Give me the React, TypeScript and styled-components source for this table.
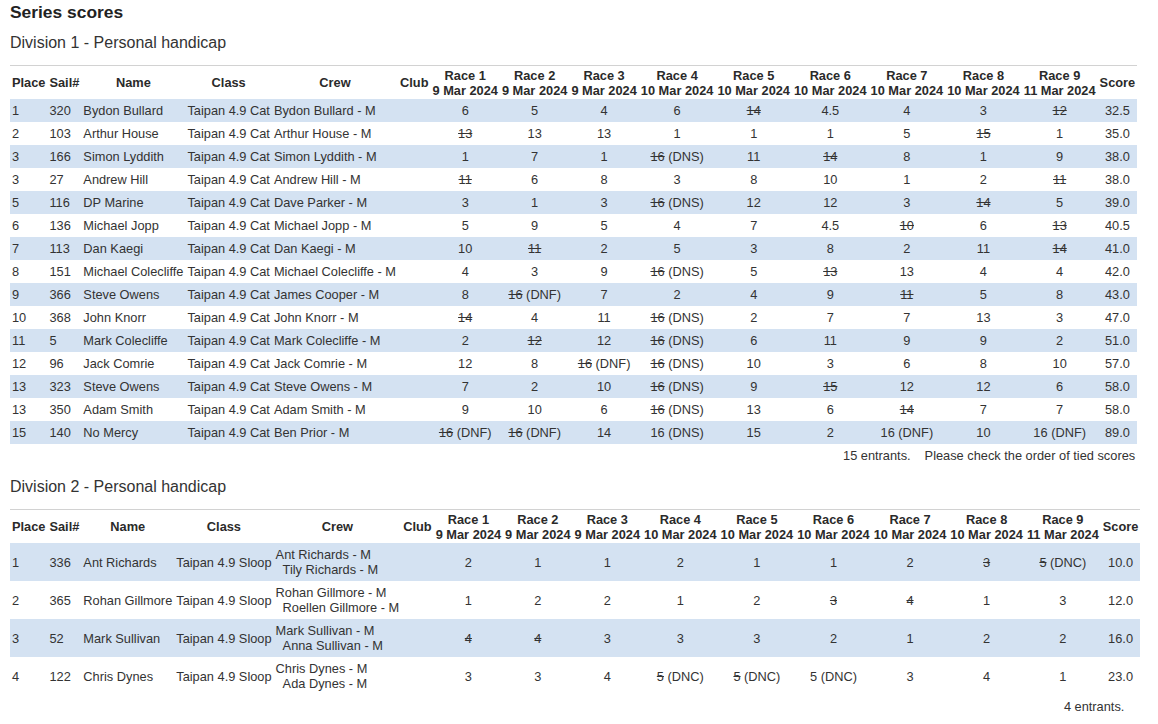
import React from "react";
import styled, { createGlobalStyle } from "styled-components";

const GlobalStyle = createGlobalStyle`
  html, body {
    margin: 0;
    padding: 0;
    background: #ffffff;
  }
  body {
    font-family: "Liberation Sans", Arial, sans-serif;
    color: #333333;
  }
`;

const Page = styled.div`
  padding: 2px 0 0 10px;
`;

const PageTitle = styled.h1`
  margin: 0;
  font-size: 17.4px;
  line-height: 20px;
  font-weight: bold;
  color: #222222;
`;

const DivisionTitle = styled.h2<{ $gap: number }>`
  margin: ${(p) => p.$gap}px 0 13px 0;
  font-size: 16px;
  line-height: 18px;
  font-weight: normal;
  color: #333333;
`;

const ScoreTable = styled.table`
  border-collapse: separate;
  border-spacing: 0;
  border-top: 1px solid #d2d2d2;
  font-size: 12.8px;
  line-height: 15px;
  color: #333333;
`;

const HeadCell = styled.th`
  padding: 1.5px 2px;
  font-weight: bold;
  text-align: center;
  vertical-align: middle;
  white-space: nowrap;
  color: #2a2a2a;
`;

const Row = styled.tr<{ $odd: boolean }>`
  background: ${(p) => (p.$odd ? "#d4e2f2" : "transparent")};
`;

const Cell = styled.td<{ $align?: "left" | "center" }>`
  padding: 4px 2px;
  text-align: ${(p) => p.$align ?? "left"};
  vertical-align: middle;
  white-space: nowrap;
`;

const CrewLine = styled.span<{ $indent: boolean }>`
  display: block;
  padding-left: ${(p) => (p.$indent ? 7 : 0)}px;
`;

const Discard = styled.s`
  text-decoration: line-through;
`;

const Footer = styled.caption`
  caption-side: bottom;
  text-align: right;
  padding: 4px 2px 0 2px;
  font-size: 12.8px;
  line-height: 15px;
  color: #333333;
  white-space: nowrap;
`;

const FooterGap = styled.span`
  display: inline-block;
  width: 14px;
`;

type Entry = {
  place: string;
  sail: string;
  name: string;
  cls: string;
  crew: string[];
  races: string[];
  score: string;
};

type Division = {
  title: string;
  entries: Entry[];
  footer: string[];
};

const raceDates = [
  "9 Mar 2024",
  "9 Mar 2024",
  "9 Mar 2024",
  "10 Mar 2024",
  "10 Mar 2024",
  "10 Mar 2024",
  "10 Mar 2024",
  "10 Mar 2024",
  "11 Mar 2024",
];

const cat = "Taipan 4.9 Cat";
const sloop = "Taipan 4.9 Sloop";

const e = (
  place: string,
  sail: string,
  name: string,
  cls: string,
  crew: string[],
  races: string,
  score: string
): Entry => ({ place, sail, name, cls, crew, races: races.split("|"), score });

const divisions: Division[] = [
  {
    title: "Division 1 - Personal handicap",
    footer: ["15 entrants.", "Please check the order of tied scores"],
    entries: [
      e("1", "320", "Bydon Bullard", cat, ["Bydon Bullard - M"], "6|5|4|6|~14|4.5|4|3|~12", "32.5"),
      e("2", "103", "Arthur House", cat, ["Arthur House - M"], "~13|13|13|1|1|1|5|~15|1", "35.0"),
      e("3", "166", "Simon Lyddith", cat, ["Simon Lyddith - M"], "1|7|1|~16 (DNS)|11|~14|8|1|9", "38.0"),
      e("3", "27", "Andrew Hill", cat, ["Andrew Hill - M"], "~11|6|8|3|8|10|1|2|~11", "38.0"),
      e("5", "116", "DP Marine", cat, ["Dave Parker - M"], "3|1|3|~16 (DNS)|12|12|3|~14|5", "39.0"),
      e("6", "136", "Michael Jopp", cat, ["Michael Jopp - M"], "5|9|5|4|7|4.5|~10|6|~13", "40.5"),
      e("7", "113", "Dan Kaegi", cat, ["Dan Kaegi - M"], "10|~11|2|5|3|8|2|11|~14", "41.0"),
      e("8", "151", "Michael Colecliffe", cat, ["Michael Colecliffe - M"], "4|3|9|~16 (DNS)|5|~13|13|4|4", "42.0"),
      e("9", "366", "Steve Owens", cat, ["James Cooper - M"], "8|~16 (DNF)|7|2|4|9|~11|5|8", "43.0"),
      e("10", "368", "John Knorr", cat, ["John Knorr - M"], "~14|4|11|~16 (DNS)|2|7|7|13|3", "47.0"),
      e("11", "5", "Mark Colecliffe", cat, ["Mark Colecliffe - M"], "2|~12|12|~16 (DNS)|6|11|9|9|2", "51.0"),
      e("12", "96", "Jack Comrie", cat, ["Jack Comrie - M"], "12|8|~16 (DNF)|~16 (DNS)|10|3|6|8|10", "57.0"),
      e("13", "323", "Steve Owens", cat, ["Steve Owens - M"], "7|2|10|~16 (DNS)|9|~15|12|12|6", "58.0"),
      e("13", "350", "Adam Smith", cat, ["Adam Smith - M"], "9|10|6|~16 (DNS)|13|6|~14|7|7", "58.0"),
      e("15", "140", "No Mercy", cat, ["Ben Prior - M"], "~16 (DNF)|~16 (DNF)|14|16 (DNS)|15|2|16 (DNF)|10|16 (DNF)", "89.0"),
    ],
  },
  {
    title: "Division 2 - Personal handicap",
    footer: ["4 entrants.", ""],
    entries: [
      e("1", "336", "Ant Richards", sloop, ["Ant Richards - M", "Tily Richards - M"], "2|1|1|2|1|1|2|~3|~5 (DNC)", "10.0"),
      e("2", "365", "Rohan Gillmore", sloop, ["Rohan Gillmore - M", "Roellen Gillmore - M"], "1|2|2|1|2|~3|~4|1|3", "12.0"),
      e("3", "52", "Mark Sullivan", sloop, ["Mark Sullivan - M", "Anna Sullivan - M"], "~4|~4|3|3|3|2|1|2|2", "16.0"),
      e("4", "122", "Chris Dynes", sloop, ["Chris Dynes - M", "Ada Dynes - M"], "3|3|4|~5 (DNC)|~5 (DNC)|5 (DNC)|3|4|1", "23.0"),
    ],
  },
];

function RaceScore({ value }: { value: string }) {
  if (!value.startsWith("~")) return <>{value}</>;
  const body = value.slice(1);
  const idx = body.indexOf(" ");
  if (idx < 0) return <Discard>{body}</Discard>;
  return (
    <>
      <Discard>{body.slice(0, idx)}</Discard>
      {body.slice(idx)}
    </>
  );
}

function DivisionTable({ division, gap }: { division: Division; gap: number }) {
  return (
    <section>
      <DivisionTitle $gap={gap}>{division.title}</DivisionTitle>
      <ScoreTable>
        <thead>
          <tr>
            <HeadCell>Place</HeadCell>
            <HeadCell>Sail#</HeadCell>
            <HeadCell>Name</HeadCell>
            <HeadCell>Class</HeadCell>
            <HeadCell>Crew</HeadCell>
            <HeadCell>Club</HeadCell>
            {raceDates.map((d, i) => (
              <HeadCell key={i}>
                Race {i + 1}
                <br />
                {d}
              </HeadCell>
            ))}
            <HeadCell>Score</HeadCell>
          </tr>
        </thead>
        <tbody>
          {division.entries.map((en, i) => (
            <Row key={i} $odd={i % 2 === 0}>
              <Cell>{en.place}</Cell>
              <Cell>{en.sail}</Cell>
              <Cell>{en.name}</Cell>
              <Cell>{en.cls}</Cell>
              <Cell>
                {en.crew.map((c, j) => (
                  <CrewLine key={j} $indent={j > 0}>
                    {c}
                  </CrewLine>
                ))}
              </Cell>
              <Cell />
              {en.races.map((r, j) => (
                <Cell key={j} $align="center">
                  <RaceScore value={r} />
                </Cell>
              ))}
              <Cell $align="center">{en.score}</Cell>
            </Row>
          ))}
        </tbody>
        <Footer>
          {division.footer[0]}
          <FooterGap />
          {division.footer[1]}
        </Footer>
      </ScoreTable>
    </section>
  );
}

export default function App() {
  return (
    <>
      <GlobalStyle />
      <Page>
        <PageTitle>Series scores</PageTitle>
        {divisions.map((d, i) => (
          <DivisionTable key={i} division={d} gap={i === 0 ? 12 : 15} />
        ))}
      </Page>
    </>
  );
}
